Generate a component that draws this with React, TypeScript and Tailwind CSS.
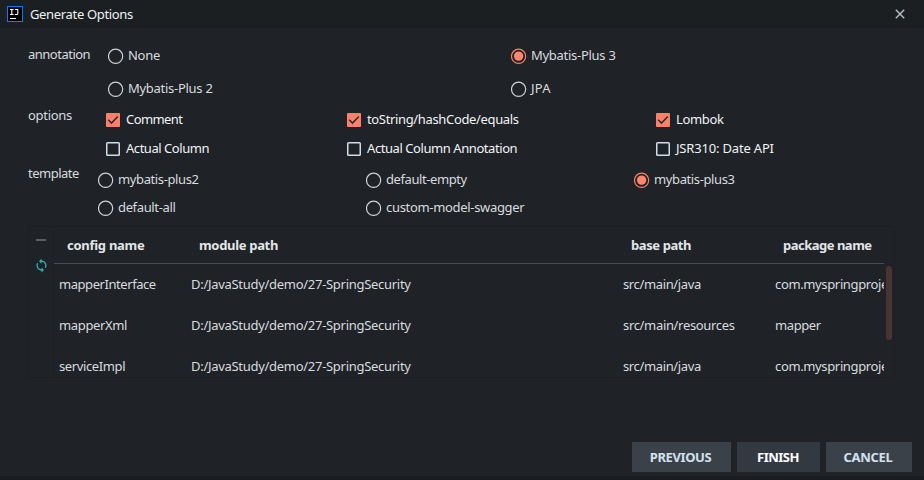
import React from "react";
import { MdSync } from "react-icons/md";

const FONT = "font-['Noto_Sans','Open_Sans',sans-serif]";

function Radio({ label, checked = false, tracking = "" }: { label: string; checked?: boolean; tracking?: string }) {
  return (
    <div className="flex h-4 items-center gap-1">
      <svg width="16" height="16" viewBox="0 0 16 16" fill="none" className="shrink-0">
        <circle cx="7.6" cy="8.3" r="7.1" stroke={checked ? "#f98069" : "#d0d3d5"} strokeWidth="1.2" />
        {checked && <circle cx="7.6" cy="8.1" r="4.7" fill="#ff8770" />}
      </svg>
      <span className={`-mt-[3px] whitespace-nowrap ${tracking}`}>{label}</span>
    </div>
  );
}

function Check({ label, checked = false, tracking = "" }: { label: string; checked?: boolean; tracking?: string }) {
  return (
    <div className="flex h-4 items-center gap-[6px] text-[#f0f4f6]">
      <svg width="14" height="14" viewBox="0 0 14 14" fill="none" className="shrink-0">
        {checked ? (
          <>
            <rect width="14" height="14" rx="1" fill="#ff806a" />
            <path d="M2.2 6.8 5.5 10.1 11.8 3.6" stroke="#272a2e" strokeWidth="1.5" />
          </>
        ) : (
          <rect x="0.75" y="0.75" width="12.5" height="12.5" rx="0.8" stroke="#cfdde5" strokeWidth="1.5" />
        )}
      </svg>
      <span className={`-mt-[3px] whitespace-nowrap ${tracking}`}>{label}</span>
    </div>
  );
}

const PATH = { text: "D:/JavaStudy/demo/27-SpringSecurity", tracking: "tracking-[-0.29px]" };
const JAVA = { text: "src/main/java", tracking: "tracking-[-0.36px]" };
const PACKAGE = { text: "com.myspringproje", tracking: "tracking-[-0.36px]" };

const rows = [
  [{ text: "mapperInterface", tracking: "tracking-[-0.44px]" }, PATH, JAVA, PACKAGE],
  [
    { text: "mapperXml", tracking: "tracking-[-0.35px]" },
    PATH,
    { text: "src/main/resources", tracking: "tracking-[-0.33px]" },
    { text: "mapper", tracking: "tracking-[-0.4px]" },
  ],
  [{ text: "serviceImpl", tracking: "tracking-[-0.38px]" }, PATH, JAVA, PACKAGE],
];

export default function App() {
  return (
    <div className={`flex h-[480px] w-[924px] flex-col overflow-hidden bg-[#1f2227] text-[13px] leading-4 text-[#d8dcdf] ${FONT}`}>
      <header className="flex h-7 shrink-0 items-center bg-[#1b1f21] pl-[7px] pr-[19px] text-[#eef1f2]">
        <svg width="16" height="16" viewBox="0 0 16 16" className="shrink-0">
          <rect x="0.5" y="0.5" width="15" height="15" fill="#000" stroke="#087cfa" />
          <path d="M3 3.5h3.6M4.8 3.5v5M3 8.5h3.6M8 3.5h2.8v4q0 1-1 1H7.8M3 12.5h6" stroke="#fff" strokeWidth="1.1" fill="none" />
        </svg>
        <span className="ml-[7px] tracking-[-0.34px]">Generate Options</span>
        <svg width="10" height="10" viewBox="0 0 10 10" className="ml-auto shrink-0" stroke="#b5c0c5" strokeWidth="1.4">
          <path d="M0.8 0.8 9.2 9.2M9.2 0.8 0.8 9.2" />
        </svg>
      </header>

      <main className="flex flex-col pl-7">
        <section className="flex h-[78px] pt-[19px]">
          <div className="-mt-px w-20 tracking-[-0.5px]">annotation</div>
          <div className="grid h-[50px] grid-cols-[403px_300px] content-start gap-y-[17px] pt-px">
            <Radio label="None" tracking="tracking-[-0.3px]" />
            <Radio label="Mybatis-Plus 3" checked tracking="tracking-[-0.28px]" />
            <Radio label="Mybatis-Plus 2" tracking="tracking-[-0.28px]" />
            <Radio label="JPA" tracking="tracking-[0.2px]" />
          </div>
        </section>
        <section className="flex h-[58px] pt-[2px]">
          <div className="-mt-px w-[78px] tracking-[-0.3px]">options</div>
          <div className="grid grid-cols-[241px_309px_200px] content-start gap-y-[13px] pt-1">
            <Check label="Comment" checked tracking="tracking-[-0.57px]" />
            <Check label="toString/hashCode/equals" checked tracking="tracking-[-0.35px]" />
            <Check label="Lombok" checked tracking="tracking-[-0.33px]" />
            <Check label="Actual Column" tracking="tracking-[-0.46px]" />
            <Check label="Actual Column Annotation" tracking="tracking-[-0.43px]" />
            <Check label="JSR310: Date API" tracking="tracking-[-0.18px]" />
          </div>
        </section>
        <section className="flex h-[62px] pt-[2px]">
          <div className="-mt-px w-[70px] tracking-[-0.5px]">template</div>
          <div className="grid grid-cols-[268px_268px_200px] content-start gap-y-3 pt-[6px]">
            <Radio label="mybatis-plus2" tracking="tracking-[-0.38px]" />
            <Radio label="default-empty" tracking="tracking-[-0.42px]" />
            <Radio label="mybatis-plus3" checked tracking="tracking-[-0.38px]" />
            <Radio label="default-all" tracking="tracking-[-0.36px]" />
            <Radio label="custom-model-swagger" tracking="tracking-[-0.32px]" />
          </div>
        </section>

        <section className="flex h-[152px] w-[867px] border border-[#1b1e22]">
          <div className="flex w-[25px] flex-col items-center border-r border-[#1b1e22] pt-[12px]">
            <div className="h-[2px] w-[10px] bg-[#5c5e61]" />
            <MdSync size={15} className="mt-[17px] shrink-0 text-[#30b4bd]" />
          </div>
          <div className="w-[830px] overflow-hidden">
            <div className="grid h-[37px] grid-cols-[132px_432px_152px_114px] items-center border-b border-[#484d59] font-bold text-[#e2e6e8]">
              <span className="pl-[13px] tracking-[-0.27px]">config name</span>
              <span className="pl-[13px] tracking-[-0.32px]">module path</span>
              <span className="pl-[13px] tracking-[-0.4px]">base path</span>
              <span className="pl-[13px] tracking-[-0.5px]">package name</span>
            </div>
            {rows.map((row, r) => (
              <div key={r} className="grid h-[41px] grid-cols-[132px_432px_152px_114px] items-center pb-[2px]">
                {row.map((cell, i) => (
                  <span key={i} className={`overflow-hidden whitespace-nowrap pl-[5px] ${cell.tracking}`}>
                    {cell.text}
                  </span>
                ))}
              </div>
            ))}
          </div>
          <div className="ml-[2px] mt-[39px] h-[74px] w-[6px] rounded-full bg-[#4a3433]" />
        </section>
      </main>

      <footer className="mt-16 flex h-[30px] shrink-0 justify-end gap-[6px] pr-3 font-bold text-[#d1e1ee]">
        <button className="w-[99px] bg-[#3b4149] pr-[2px] tracking-[-0.38px]">PREVIOUS</button>
        <button className="w-[83px] bg-[#333940] pr-px tracking-[-0.5px] text-white">FINISH</button>
        <button className="w-[86px] bg-[#3b4149] pr-[2px] tracking-[-0.3px]">CANCEL</button>
      </footer>
      <div className="mt-auto h-1 bg-[#1a1b20]" />
    </div>
  );
}
